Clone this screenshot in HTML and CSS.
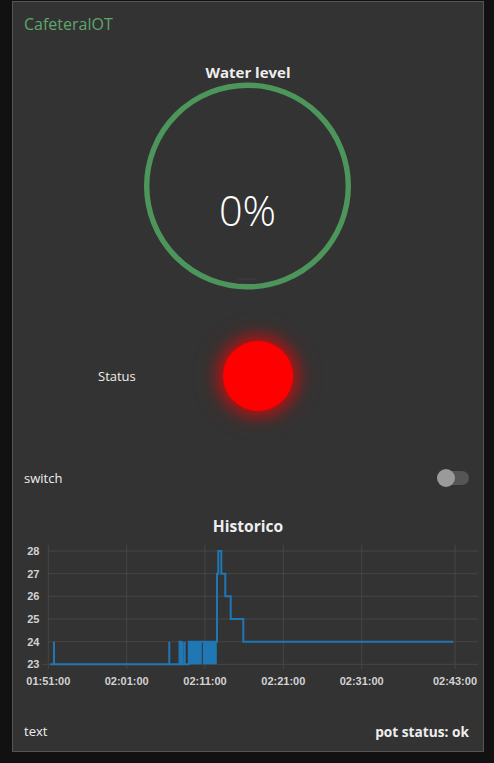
FILE: index.html
```html
<!DOCTYPE html>
<html>
<head>
<meta charset="utf-8">
<link rel="stylesheet" href="styles.css">
</head>
<body>
<div class="panel">
  <div class="title">CafeteralOT</div>

  <div class="gauge">
    <div class="widget-label">Water level</div>
    <svg class="gauge-svg" width="210" height="210" viewBox="0 0 210 210">
      <circle cx="104.5" cy="104" r="100.8" fill="none" stroke="#4c965b" stroke-width="5.4"/>
      <line x1="95.5" y1="197.2" x2="113.5" y2="197.2" stroke="#404040" stroke-width="1"/>
      <text x="104.5" y="143.7" text-anchor="middle" class="gauge-value">0%</text>
    </svg>
  </div>

  <div class="status-row">
    <div class="status-label">Status</div>
    <div class="led"></div>
  </div>

  <div class="switch-row">
    <span>switch</span>
    <div class="toggle"></div>
  </div>

  <div class="chart">
    <div class="widget-label chart-label">Historico</div>
    <svg class="chart-svg" width="469" height="176" viewBox="13 536 469 176">
      <g stroke="#464646" stroke-width="1">
        <line x1="48" y1="551" x2="478" y2="551"/>
        <line x1="48" y1="573.7" x2="478" y2="573.7"/>
        <line x1="48" y1="596.3" x2="478" y2="596.3"/>
        <line x1="48" y1="619" x2="478" y2="619"/>
        <line x1="48" y1="641.7" x2="478" y2="641.7"/>
        <line x1="42" y1="664.3" x2="478" y2="664.3"/>
        <line x1="48.3" y1="545" x2="48.3" y2="669"/>
        <line x1="126.7" y1="545" x2="126.7" y2="669"/>
        <line x1="205" y1="545" x2="205" y2="669"/>
        <line x1="283.3" y1="545" x2="283.3" y2="669"/>
        <line x1="361.7" y1="545" x2="361.7" y2="669"/>
        <line x1="455" y1="545" x2="455" y2="669"/>
      </g>
      <g class="tick" text-anchor="end">
        <text x="39.5" y="555">28</text>
        <text x="39.5" y="577.7">27</text>
        <text x="39.5" y="600.3">26</text>
        <text x="39.5" y="623">25</text>
        <text x="39.5" y="645.7">24</text>
        <text x="39.5" y="668.3">23</text>
      </g>
      <g class="tick" text-anchor="middle">
        <text x="48.3" y="685">01:51:00</text>
        <text x="126.7" y="685">02:01:00</text>
        <text x="205" y="685">02:11:00</text>
        <text x="283.3" y="685">02:21:00</text>
        <text x="361.7" y="685">02:31:00</text>
        <text x="455" y="685">02:43:00</text>
      </g>
      <g fill="#1f77b4">
        <rect x="188.8" y="641.7" width="13" height="22.6"/>
        <rect x="202.8" y="641.7" width="14" height="22.6"/>
      </g>
      <path fill="none" stroke="#1f77b4" stroke-width="2" stroke-linejoin="miter"
        d="M50 664.3 H54 V641.7 V664.3 H169.3 V641.7 V664.3 H179.5 V641.7 H181.5 V664.3 H182.5 V641.7 V664.3 H184.7 V641.7 V664.3 H188.8 V641.7 H217 V573.7 H218.3 V551 H221.3 V573.7 H225.3 V596.3 H230.7 V619 H243.3 V641.7 H453.3"/>
    </svg>
  </div>

  <div class="footer-row">
    <span>text</span>
    <span class="bold">pot status: ok</span>
  </div>
</div>
</body>
</html>
```
FILE: styles.css
```css
html, body {
  margin: 0;
  padding: 0;
  background: #111111;
}
body {
  font-family: "Open Sans", "Noto Sans", sans-serif;
  color: #eeeeee;
  font-size: 13px;
}
.panel {
  margin: 1px 0 0 12px;
  width: 470px;
  height: 749px;
  border: 1px solid #555555;
  background: #333333;
  display: flex;
  flex-direction: column;
}
.title {
  height: 44px;
  line-height: 44px;
  padding-left: 11px;
  color: #5fa66d;
  font-size: 16px;
  font-weight: 500;
}
.gauge {
  height: 250px;
  padding-top: 16px;
  box-sizing: border-box;
  display: flex;
  flex-direction: column;
  align-items: center;
}
.widget-label {
  height: 20px;
  line-height: 20px;
  font-size: 15px;
  font-weight: bold;
  text-align: center;
}
.chart-label {
  font-size: 15.6px;
}
.gauge-svg {
  display: block;
}
.gauge-value {
  font-family: "Open Sans", "Noto Sans", sans-serif;
  font-size: 41.5px;
  font-weight: 300;
  fill: #ffffff;
}
.status-row {
  height: 160px;
  display: flex;
  align-items: center;
  padding-left: 85px;
}
.status-label {
  width: 125px;
}
.led {
  width: 70px;
  height: 70px;
  border-radius: 50%;
  background: #ff0000;
  box-shadow: 0 0 14px 6px rgba(255, 0, 0, 0.55), 0 0 26px 10px rgba(255, 0, 0, 0.12);
}
.switch-row {
  height: 44px;
  display: flex;
  align-items: center;
  justify-content: space-between;
  padding: 0 14px 0 11px;
}
.toggle {
  position: relative;
  width: 28px;
  height: 14px;
  border-radius: 7px;
  background: #555555;
}
.toggle::after {
  content: "";
  position: absolute;
  left: -4px;
  top: -2px;
  width: 18px;
  height: 18px;
  border-radius: 50%;
  background: #9a9a9a;
}
.chart {
  height: 212px;
  padding-top: 16px;
  box-sizing: border-box;
  display: flex;
  flex-direction: column;
}
.chart-svg {
  display: block;
}
.tick {
  font-family: "Liberation Sans", Arial, sans-serif;
  font-size: 11px;
  font-weight: bold;
  fill: #d2d2d2;
}
.footer-row {
  height: 38px;
  display: flex;
  align-items: center;
  justify-content: space-between;
  padding: 0 14px 0 11px;
}
.bold {
  font-weight: bold;
  font-size: 13.7px;
}
```
